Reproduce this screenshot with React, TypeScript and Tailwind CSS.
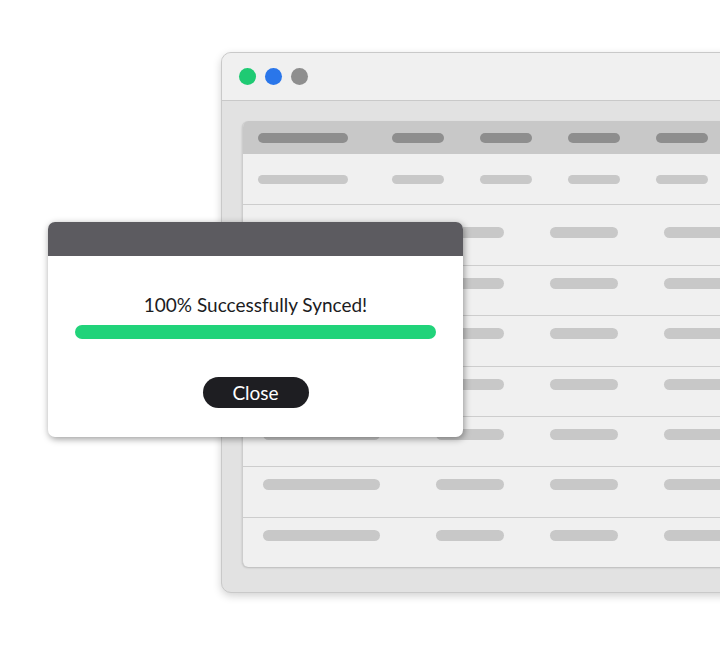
import React from "react";

const rows = [
  { h: 51, pt: 21, first: true },
  { h: 61, pt: 22 },
  { h: 50, pt: 12 },
  { h: 51, pt: 12 },
  { h: 50, pt: 12 },
  { h: 50, pt: 12 },
  { h: 51, pt: 12 },
  { h: 49, pt: 12, last: true },
];

function Bar({ w, dark, h = 11 }: { w: number; dark?: boolean; h?: number }) {
  return (
    <div
      className={dark ? "shrink-0 rounded-full bg-[#8e8e8e]" : "shrink-0 rounded-full bg-[#c8c8c8]"}
      style={{ width: w, height: h }}
    />
  );
}

export default function App() {
  return (
    <div
      className="relative w-[720px] h-[646px] overflow-hidden bg-white"
      style={{ fontFamily: "Lato, 'Open Sans', sans-serif" }}
    >
      {/* Window */}
      <div className="ml-[221px] mt-[52px] w-[560px] h-[541px] rounded-[10px] border border-[#c9c9c9] bg-[#e2e2e2] shadow-[0_3px_8px_rgba(0,0,0,0.18)] overflow-hidden flex flex-col">
        <div className="h-[48px] shrink-0 bg-[#f0f0f0] border-b border-[#c9c9c9] flex items-center gap-[9px] pl-[17px]">
          <div className="w-[17px] h-[17px] rounded-full bg-[#1fca73]" />
          <div className="w-[17px] h-[17px] rounded-full bg-[#2a76ea]" />
          <div className="w-[17px] h-[17px] rounded-full bg-[#8e8e8e]" />
        </div>
        <div className="pt-[20px] pl-[20px]">
          <div className="rounded-l-[6px] bg-[#f0f0f0] border-l border-[#cdcdcd] overflow-hidden shadow-[0_1px_2px_rgba(0,0,0,0.18)]">
            <div className="h-[33px] bg-[#c8c8c8] flex pt-[12px] pl-[15px]">
              <Bar w={90} dark h={10} />
              <div className="ml-[44px]"><Bar w={52} dark h={10} /></div>
              <div className="ml-[36px]"><Bar w={52} dark h={10} /></div>
              <div className="ml-[36px]"><Bar w={52} dark h={10} /></div>
              <div className="ml-[36px]"><Bar w={52} dark h={10} /></div>
            </div>
            {rows.map((r, i) => (
              <div
                key={i}
                className={r.last ? "box-border" : "box-border border-b border-[#cdcdcd]"}
                style={{ height: r.h, paddingTop: r.pt }}
              >
                {r.first ? (
                  <div className="flex pl-[15px]">
                    <Bar w={90} h={9} />
                    <div className="ml-[44px]"><Bar w={52} h={9} /></div>
                    <div className="ml-[36px]"><Bar w={52} h={9} /></div>
                    <div className="ml-[36px]"><Bar w={52} h={9} /></div>
                    <div className="ml-[36px]"><Bar w={52} h={9} /></div>
                  </div>
                ) : (
                  <div className="flex pl-[20px]">
                    <Bar w={117} />
                    <div className="ml-[56px]"><Bar w={68} /></div>
                    <div className="ml-[46px]"><Bar w={68} /></div>
                    <div className="ml-[46px]"><Bar w={68} /></div>
                  </div>
                )}
              </div>
            ))}
          </div>
        </div>
      </div>

      {/* Dialog */}
      <div className="absolute left-[48px] top-[222px] w-[415px] rounded-[7px] bg-white overflow-hidden shadow-[1px_2px_7px_rgba(0,0,0,0.4)]">
        <div className="h-[34px] bg-[#5c5b60]" />
        <div className="flex flex-col items-center pt-[38px] pb-[29px] px-[27px]">
          <div className="text-[19px] leading-[22px] text-[#1c1c1e]">100% Successfully Synced!</div>
          <div className="mt-[9px] h-[14px] w-full rounded-full bg-[#21d37a]" />
          <button className="mt-[38px] w-[106px] h-[31px] rounded-full bg-[#1e1e22] text-white text-[19px] leading-[31px]">
            Close
          </button>
        </div>
      </div>
    </div>
  );
}
